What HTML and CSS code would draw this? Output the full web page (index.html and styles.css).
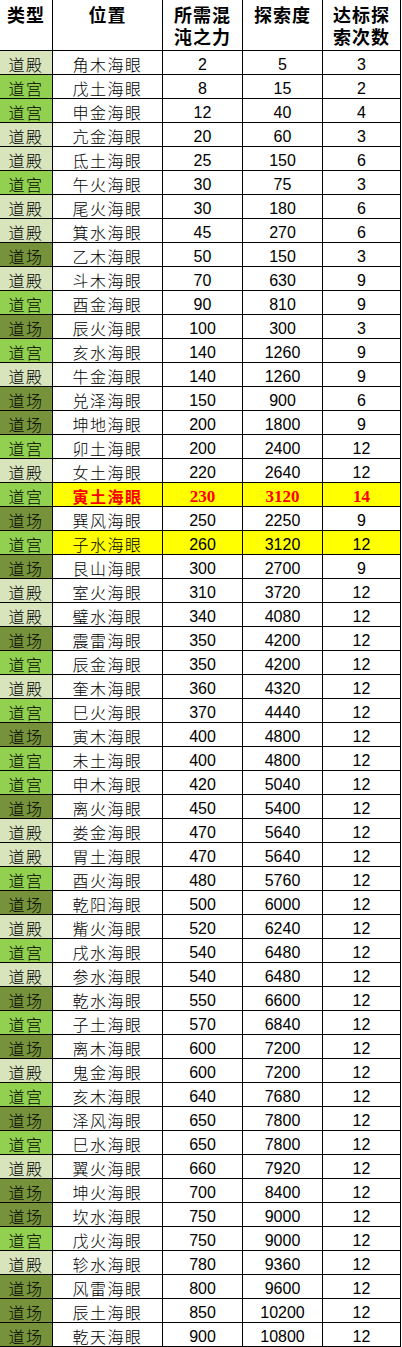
FILE: index.html
```html
<!DOCTYPE html>
<html lang="zh">
<head>
<meta charset="utf-8">
<link rel="stylesheet" href="styles.css">
<title>海眼</title>
</head>
<body>
<table class="sheet">
<colgroup><col class="c1"><col class="c2"><col class="c3"><col class="c4"><col class="c5"></colgroup>
<thead>
<tr><th>类型</th><th>位置</th><th>所需混<br>沌之力</th><th>探索度</th><th>达标探<br>索次数</th></tr>
</thead>
<tbody>
<tr><td class="t dian">道殿</td><td class="n">角木海眼</td><td>2</td><td>5</td><td>3</td></tr>
<tr><td class="t gong">道宫</td><td class="n">戊土海眼</td><td>8</td><td>15</td><td>2</td></tr>
<tr><td class="t gong">道宫</td><td class="n">申金海眼</td><td>12</td><td>40</td><td>4</td></tr>
<tr><td class="t dian">道殿</td><td class="n">亢金海眼</td><td>20</td><td>60</td><td>3</td></tr>
<tr><td class="t dian">道殿</td><td class="n">氐土海眼</td><td>25</td><td>150</td><td>6</td></tr>
<tr><td class="t gong">道宫</td><td class="n">午火海眼</td><td>30</td><td>75</td><td>3</td></tr>
<tr><td class="t dian">道殿</td><td class="n">尾火海眼</td><td>30</td><td>180</td><td>6</td></tr>
<tr><td class="t dian">道殿</td><td class="n">箕水海眼</td><td>45</td><td>270</td><td>6</td></tr>
<tr><td class="t chang">道场</td><td class="n">乙木海眼</td><td>50</td><td>150</td><td>3</td></tr>
<tr><td class="t dian">道殿</td><td class="n">斗木海眼</td><td>70</td><td>630</td><td>9</td></tr>
<tr><td class="t gong">道宫</td><td class="n">酉金海眼</td><td>90</td><td>810</td><td>9</td></tr>
<tr><td class="t chang">道场</td><td class="n">辰火海眼</td><td>100</td><td>300</td><td>3</td></tr>
<tr><td class="t gong">道宫</td><td class="n">亥水海眼</td><td>140</td><td>1260</td><td>9</td></tr>
<tr><td class="t dian">道殿</td><td class="n">牛金海眼</td><td>140</td><td>1260</td><td>9</td></tr>
<tr><td class="t chang">道场</td><td class="n">兑泽海眼</td><td>150</td><td>900</td><td>6</td></tr>
<tr><td class="t chang">道场</td><td class="n">坤地海眼</td><td>200</td><td>1800</td><td>9</td></tr>
<tr><td class="t gong">道宫</td><td class="n">卯土海眼</td><td>200</td><td>2400</td><td>12</td></tr>
<tr><td class="t dian">道殿</td><td class="n">女土海眼</td><td>220</td><td>2640</td><td>12</td></tr>
<tr class="hl best"><td class="t gong">道宫</td><td class="n">寅土海眼</td><td>230</td><td>3120</td><td>14</td></tr>
<tr><td class="t chang">道场</td><td class="n">巽风海眼</td><td>250</td><td>2250</td><td>9</td></tr>
<tr class="hl"><td class="t gong">道宫</td><td class="n">子水海眼</td><td>260</td><td>3120</td><td>12</td></tr>
<tr><td class="t chang">道场</td><td class="n">艮山海眼</td><td>300</td><td>2700</td><td>9</td></tr>
<tr><td class="t dian">道殿</td><td class="n">室火海眼</td><td>310</td><td>3720</td><td>12</td></tr>
<tr><td class="t dian">道殿</td><td class="n">璧水海眼</td><td>340</td><td>4080</td><td>12</td></tr>
<tr><td class="t chang">道场</td><td class="n">震雷海眼</td><td>350</td><td>4200</td><td>12</td></tr>
<tr><td class="t gong">道宫</td><td class="n">辰金海眼</td><td>350</td><td>4200</td><td>12</td></tr>
<tr><td class="t dian">道殿</td><td class="n">奎木海眼</td><td>360</td><td>4320</td><td>12</td></tr>
<tr><td class="t gong">道宫</td><td class="n">巳火海眼</td><td>370</td><td>4440</td><td>12</td></tr>
<tr><td class="t chang">道场</td><td class="n">寅木海眼</td><td>400</td><td>4800</td><td>12</td></tr>
<tr><td class="t gong">道宫</td><td class="n">未土海眼</td><td>400</td><td>4800</td><td>12</td></tr>
<tr><td class="t gong">道宫</td><td class="n">申木海眼</td><td>420</td><td>5040</td><td>12</td></tr>
<tr><td class="t chang">道场</td><td class="n">离火海眼</td><td>450</td><td>5400</td><td>12</td></tr>
<tr><td class="t dian">道殿</td><td class="n">娄金海眼</td><td>470</td><td>5640</td><td>12</td></tr>
<tr><td class="t dian">道殿</td><td class="n">胃土海眼</td><td>470</td><td>5640</td><td>12</td></tr>
<tr><td class="t gong">道宫</td><td class="n">酉火海眼</td><td>480</td><td>5760</td><td>12</td></tr>
<tr><td class="t chang">道场</td><td class="n">乾阳海眼</td><td>500</td><td>6000</td><td>12</td></tr>
<tr><td class="t dian">道殿</td><td class="n">觜火海眼</td><td>520</td><td>6240</td><td>12</td></tr>
<tr><td class="t gong">道宫</td><td class="n">戌水海眼</td><td>540</td><td>6480</td><td>12</td></tr>
<tr><td class="t dian">道殿</td><td class="n">参水海眼</td><td>540</td><td>6480</td><td>12</td></tr>
<tr><td class="t chang">道场</td><td class="n">乾水海眼</td><td>550</td><td>6600</td><td>12</td></tr>
<tr><td class="t gong">道宫</td><td class="n">子土海眼</td><td>570</td><td>6840</td><td>12</td></tr>
<tr><td class="t chang">道场</td><td class="n">离木海眼</td><td>600</td><td>7200</td><td>12</td></tr>
<tr><td class="t dian">道殿</td><td class="n">鬼金海眼</td><td>600</td><td>7200</td><td>12</td></tr>
<tr><td class="t gong">道宫</td><td class="n">亥木海眼</td><td>640</td><td>7680</td><td>12</td></tr>
<tr><td class="t chang">道场</td><td class="n">泽风海眼</td><td>650</td><td>7800</td><td>12</td></tr>
<tr><td class="t gong">道宫</td><td class="n">巳水海眼</td><td>650</td><td>7800</td><td>12</td></tr>
<tr><td class="t dian">道殿</td><td class="n">翼火海眼</td><td>660</td><td>7920</td><td>12</td></tr>
<tr><td class="t chang">道场</td><td class="n">坤火海眼</td><td>700</td><td>8400</td><td>12</td></tr>
<tr><td class="t chang">道场</td><td class="n">坎水海眼</td><td>750</td><td>9000</td><td>12</td></tr>
<tr><td class="t gong">道宫</td><td class="n">戊火海眼</td><td>750</td><td>9000</td><td>12</td></tr>
<tr><td class="t dian">道殿</td><td class="n">轸水海眼</td><td>780</td><td>9360</td><td>12</td></tr>
<tr><td class="t chang">道场</td><td class="n">风雷海眼</td><td>800</td><td>9600</td><td>12</td></tr>
<tr><td class="t chang">道场</td><td class="n">辰土海眼</td><td>850</td><td>10200</td><td>12</td></tr>
<tr><td class="t chang">道场</td><td class="n">乾天海眼</td><td>900</td><td>10800</td><td>12</td></tr>
</tbody>
</table>
</body>
</html>
```
FILE: styles.css
```css
html, body {
  margin: 0;
  padding: 0;
  background: #ffffff;
}

.sheet {
  border-collapse: separate;
  border-spacing: 0;
  table-layout: fixed;
  width: 401px;
  font-family: "Liberation Sans", "Noto Sans CJK SC", sans-serif;
  color: #000;
}

.c1 { width: 53px; }
.c2 { width: 110px; }
.c3 { width: 80px; }
.c4 { width: 80px; }
.c5 { width: 78px; }

.sheet th,
.sheet td {
  border-right: 1px solid #000;
  border-bottom: 1px solid #000;
  padding: 0;
  text-align: center;
  white-space: nowrap;
  overflow: hidden;
}

.sheet th {
  height: 47px;
  padding-top: 3px;
  vertical-align: top;
  font-family: "Noto Sans CJK SC", sans-serif;
  font-weight: 700;
  font-size: 18px;
  line-height: 22px;
  letter-spacing: 1px;
}

.sheet td {
  height: 19px;
  padding-top: 4px;
  line-height: 19px;
  vertical-align: top;
  font-size: 16px;
}

.sheet td.t,
.sheet td.n {
  font-family: "Noto Sans CJK SC", sans-serif;
  font-weight: 300;
  letter-spacing: 1.5px;
}

.dian { background: #d8e4bc; }
.gong { background: #92d050; }
.chang { background: #76933c; }

.hl td:not(.t) { background: #ffff00; }

.best td:not(.t) {
  color: #ff0000;
  font-weight: 700;
}

.best td:not(.t):not(.n) {
  font-family: "Liberation Serif", serif;
  font-size: 17px;
}
```
